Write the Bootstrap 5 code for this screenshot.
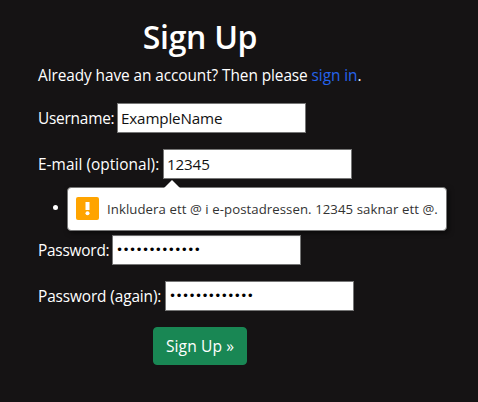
<!DOCTYPE html>
<html lang="en">
<head>
<meta charset="utf-8">
<meta name="viewport" content="width=device-width, initial-scale=1">
<title>Sign Up</title>
<link rel="stylesheet" href="https://cdn.jsdelivr.net/npm/bootstrap@5.3.0/dist/css/bootstrap.min.css">
<style>
body{background:#151314;color:#fff;font-family:"Segoe UI","Open Sans",sans-serif;font-size:15.4px;line-height:24px;overflow:hidden}
.signup{width:324px;margin-left:38px;padding-top:18px}
.signup h1{font-size:32px;line-height:38px;font-weight:600;letter-spacing:-.3px}
.intro{letter-spacing:-.08px;margin-bottom:15px}
.intro a{color:#2563eb}
.field{height:30px;margin-bottom:16px;letter-spacing:-.22px}
.field label{flex:none;padding-top:2px}
.field input{width:189px;height:30px;flex:none;border:1px solid #767676;background:#fff;color:#111;padding:0 3px;outline:0;border-radius:0;font-size:15.2px;letter-spacing:-.15px}
.field input.secret{font-family:"DejaVu Sans",sans-serif;font-size:12px;letter-spacing:-.6px;color:#000}
.l-user{width:79px}.l-mail{width:125px;letter-spacing:.05px}.l-pass{width:74px}.l-again{width:127px;letter-spacing:-.12px}
.errors{height:24px;margin:0 0 16px;padding-left:32px}
.bubble{left:67px;top:187px;width:380px;height:44px;background:#fff;border:1px solid #777;border-radius:4px;box-shadow:2px 2px 5px #0008;color:#333;font-size:13.2px;letter-spacing:.07px;padding:0 0 2px 8px;z-index:2}
.bubble .msg{padding-top:2px}
.bubble .tip{left:95px;top:-8px}
.btn-go{width:94px;height:38px;padding:1px 0 0;font-size:15.6px;letter-spacing:.1px;background:#198754;border-radius:4px}
</style>
<script src="https://cdn.jsdelivr.net/npm/bootstrap@5.3.0/dist/js/bootstrap.bundle.min.js"></script>
</head>
<body>
<main class="signup">
<h1 class="text-center mb-2">Sign Up</h1>
<p class="intro text-nowrap">Already have an account? Then please <a href="#" class="text-decoration-none">sign in</a>.</p>
<form novalidate>
<div class="field d-flex align-items-center text-nowrap"><label class="l-user" for="u">Username:</label><input id="u" type="text" value="ExampleName"></div>
<div class="field d-flex align-items-center text-nowrap"><label class="l-mail" for="e">E-mail (optional):</label><input id="e" type="text" value="12345"></div>
<ul class="errors"><li></li></ul>
<div class="field d-flex align-items-center text-nowrap"><label class="l-pass" for="p">Password:</label><input class="secret" id="p" type="password" value="1234567890123"></div>
<div class="field d-flex align-items-center text-nowrap"><label class="l-again" for="q">Password (again):</label><input class="secret" id="q" type="password" value="1234567890123"></div>
<div class="text-center"><button type="button" class="btn btn-success btn-go">Sign Up »</button></div>
</form>
</main>
<div class="bubble position-absolute d-flex align-items-center text-nowrap" role="alert">
<svg class="tip position-absolute" width="18" height="9" viewBox="0 0 18 9"><path d="M0 9L9 0L18 9Z" fill="#fff"/></svg>
<svg class="flex-shrink-0 me-2" width="23" height="23" viewBox="0 0 23 23"><rect width="23" height="23" rx="2" fill="#ffa400"/><path d="M9.5 5h4v8h-4z" fill="#fff"/><circle cx="11.5" cy="16.3" r="2" fill="#fff"/></svg>
<span class="msg">Inkludera ett @ i e-postadressen. 12345 saknar ett @.</span>
</div>
</body>
</html>
